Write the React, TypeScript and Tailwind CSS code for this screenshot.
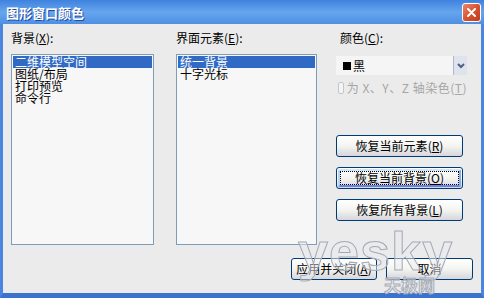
import type { ReactNode } from "react";

const FONT = "font-['SimSun','Noto_Sans_CJK_SC',sans-serif]";

function Key({ k }: { k: string }) {
  return (
    <>
      (<span className="underline underline-offset-1">{k}</span>)
    </>
  );
}

function XpButton({
  children,
  focused,
  className = "",
}: {
  children: ReactNode;
  focused?: boolean;
  className?: string;
}) {
  return (
    <button
      type="button"
      className={`flex items-center justify-center rounded-[3px] border border-[#003c74] bg-gradient-to-b from-[#ffffff] via-[#f4f4f0] to-[#d6d6de] p-[1px] text-[12px] leading-[12px] text-black ${className}`}
    >
      <span
        className={`flex h-full w-full items-center justify-center rounded-[2px] ${
          focused
            ? "border-[2px] border-t-[#cee7ff] border-l-[#bcd4f6] border-r-[#89adf0] border-b-[#6982ee]"
            : ""
        }`}
      >
        <span
          className={`flex h-full w-full items-center justify-center ${
            focused ? "outline-1 outline-dotted outline-offset-[-1px] outline-black" : ""
          }`}
        >
          {children}
        </span>
      </span>
    </button>
  );
}

function ListBox({
  items,
  selected,
  className = "",
}: {
  items: string[];
  selected: number;
  className?: string;
}) {
  return (
    <div
      className={`h-[191px] border border-[#7f9db9] bg-[#f7f7f7] px-[1px] pt-[1px] ${className}`}
    >
      {items.map((it, i) => (
        <div
          key={it}
          className={`h-[12px] whitespace-nowrap px-[2px] text-[12px] leading-[12px] ${
            i === selected ? "bg-[#316ac5] text-white" : "text-black"
          }`}
        >
          {it}
        </div>
      ))}
    </div>
  );
}

export default function App() {
  return (
    <div className={`relative flex h-[298px] w-[484px] flex-col overflow-hidden ${FONT}`}>
      {/* title bar */}
      <div className="flex h-[24px] shrink-0 items-center justify-between bg-gradient-to-b from-[#3f82de] via-[#66a5ee] to-[#4f8fe3] pl-[6px] pr-[3px]">
        <span className="text-[13px] font-bold leading-[13px] text-white [text-shadow:1px_1px_0_#1d4aa0]">
          图形窗口颜色
        </span>
        <div className="flex h-[19px] w-[19px] items-center justify-center rounded-[3px] border border-white bg-gradient-to-br from-[#e8866a] via-[#d9532f] to-[#c03a1c]">
          <svg width="9" height="9" viewBox="0 0 9 9">
            <path d="M1 1 L8 8 M8 1 L1 8" stroke="white" strokeWidth="2" strokeLinecap="round" />
          </svg>
        </div>
      </div>

      {/* body */}
      <div className="flex flex-1 flex-col border-x-[3px] border-b-[5px] border-x-[#4a86e0] border-b-[#3b72d0] bg-[#ebebeb] pl-[8px] pr-[8px] pt-[7px]">
        <div className="flex">
          <div className="flex w-[143px] flex-col">
            <div className="h-[14px] text-[12px] leading-[14px] text-black">
              背景<Key k="X" />:
            </div>
            <ListBox
              className="mt-[9px]"
              items={["二维模型空间", "图纸/布局", "打印预览", "命令行"]}
              selected={0}
            />
          </div>

          <div className="ml-[22px] flex w-[141px] flex-col">
            <div className="h-[14px] text-[12px] leading-[14px] text-black">
              界面元素<Key k="E" />:
            </div>
            <ListBox className="mt-[9px]" items={["统一背景", "十字光标"]} selected={0} />
          </div>

          <div className="ml-[19px] flex w-[131px] flex-col">
            <div className="h-[14px] pl-[4px] text-[12px] leading-[14px] text-black">
              颜色<Key k="C" />:
            </div>
            <div className="mt-[11px] flex h-[19px] items-stretch bg-[#f5f5f5]">
              <div className="flex flex-1 items-center gap-[2px] pl-[7px]">
                <span className="h-[8px] w-[8px] bg-black" />
                <span className="text-[12px] leading-[12px] text-black">黑</span>
              </div>
              <div className="flex w-[14px] items-center justify-center border-l border-[#b0b8c8] bg-[#dfe3ee]">
                <svg width="8" height="6" viewBox="0 0 8 6">
                  <path d="M1 1 L4 4 L7 1" stroke="#4d6185" strokeWidth="2" fill="none" />
                </svg>
              </div>
            </div>
            <div className="mt-[6px] flex h-[13px] items-center gap-[3px] pl-[2px]">
              <span className="h-[12px] w-[12px] rounded-[2px] border border-[#c2c7cc] bg-[#f4f4f4]" />
              <span className="whitespace-nowrap text-[12px] leading-[12px] tracking-[0.5px] text-[#a6a6a6]">
                为 X、Y、Z 轴染色<Key k="T" />
              </span>
            </div>
            <div className="mt-[41px] flex flex-col gap-[10px]">
              <XpButton className="h-[22px] w-[127px]">
                恢复当前元素<Key k="R" />
              </XpButton>
              <XpButton className="h-[22px] w-[127px]" focused>
                恢复当前背景<Key k="O" />
              </XpButton>
              <XpButton className="h-[22px] w-[127px]">
                恢复所有背景<Key k="L" />
              </XpButton>
            </div>
          </div>
        </div>

        <div className="mt-[13px] flex justify-end gap-[9px]">
          <XpButton className="h-[22px] w-[86px]">
            应用并关闭<Key k="A" />
          </XpButton>
          <XpButton className="h-[22px] w-[87px]">取消</XpButton>
        </div>
      </div>

      {/* watermark */}
      <div className="pointer-events-none absolute left-[298px] top-[226px] flex flex-col">
        <span className="font-['Liberation_Sans',sans-serif] text-[54px] font-bold leading-[50px] tracking-[1px] text-[#ececf0]/50 [-webkit-text-stroke:1px_#a4aab6]">
          yesky
        </span>
        <span className="ml-[86px] text-[17px] font-bold leading-[17px] text-[#ececf0]/50 [-webkit-text-stroke:1px_#a8aeb8]">
          天极网
        </span>
      </div>
    </div>
  );
}
